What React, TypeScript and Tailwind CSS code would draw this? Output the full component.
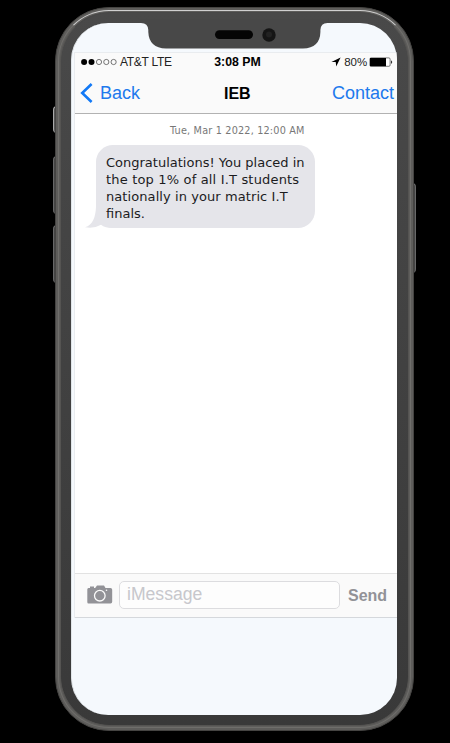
import React from "react";

function StatusBar() {
  return (
    <div className="flex h-[19px] shrink-0 items-center pl-[6px] pr-[4px] text-black">
      <svg className="mr-[3px] h-[8px] w-[36px] shrink-0 -translate-y-px" viewBox="0 0 36 8">
        <circle cx="3.1" cy="4" r="3" />
        <circle cx="10.5" cy="4" r="3" />
        <g fill="none" stroke="#555" strokeWidth="0.8">
          <circle cx="18" cy="4" r="2.6" />
          <circle cx="25.3" cy="4" r="2.6" />
          <circle cx="32.6" cy="4" r="2.6" />
        </g>
      </svg>
      <span className="w-[95px] -translate-y-px text-[12px] tracking-[-0.3px] text-[#222]">AT&amp;T LTE</span>
      <span className="w-[118px] text-[12.3px] font-bold">3:08 PM</span>
      <svg className="h-[10px] w-[10px] shrink-0 -translate-y-px" viewBox="0 0 10 10">
        <path d="M9.6.4.4 5h4.300l.5 4.600z" />
      </svg>
      <span className="ml-[3px] w-[25px] text-[11.5px] text-[#222]">80%</span>
      <svg className="h-[10px] w-[24px] shrink-0 -translate-y-px" viewBox="0 0 24 10">
        <rect x=".9" y=".9" width="20.2" height="8.4" rx="1.2" fill="#fff" stroke="#444" strokeWidth=".7" />
        <rect x="1" y="1" width="16" height="8.2" />
        <path d="M22.2 3.3q2 1.800 0 3.600z" />
      </svg>
    </div>
  );
}

function NavBar() {
  return (
    <div className="flex h-[42px] shrink-0 items-center border-b border-[#b2b2b2] pl-[5px] pt-[2px]">
      <svg className="mr-[7px] h-[20px] w-[13px] shrink-0 -translate-y-px" viewBox="0 0 13 20">
        <path d="M11.6 1 2.2 10l9.4 9" fill="none" stroke="#1279f6" strokeWidth="2.6" />
      </svg>
      <span className="w-[124px] text-[18px] text-[#2079ed]">Back</span>
      <span className="w-[108px] text-[16px] font-bold text-black">IEB</span>
      <span className="text-[18px] text-[#2079ed]">Contact</span>
    </div>
  );
}

function Messages() {
  return (
    <div className="flex-1 bg-white pt-[10px]">
      <p className="ml-[95px] whitespace-nowrap font-['DejaVu_Sans',sans-serif] text-[9.7px] leading-[13px] tracking-[0.18px] text-[#777]">
        Tue, Mar 1 2022, 12:00 AM
      </p>
      <div className="relative ml-[21px] mt-[8px] h-[83px] w-[219px] rounded-[17px] bg-[#e5e5ea] pl-[10px] pt-[9px] font-['DejaVu_Sans',sans-serif] text-[13px] leading-[17px] text-[#1c1c1e]">
        <svg className="absolute bottom-0 left-[-11px] h-[21px] w-[28px]" viewBox="0 0 28 21">
          <path d="M11 0C10.500 10 8 18 0 20.300q9 1.700 16-2.500Q20 21 28 21V0z" fill="#e5e5ea" />
        </svg>
        <p className="relative whitespace-nowrap">
          Congratulations! You placed in<br />
          <span className="tracking-[0.17px]">the top 1% of all I.T students</span><br />
          <span className="tracking-[0.08px]">nationally in your matric I.T</span><br />
          finals.
        </p>
      </div>
    </div>
  );
}

function Composer() {
  return (
    <div className="flex h-[45px] shrink-0 items-center border-y border-b-[#d5d8dc] border-t-[#e2e2e2] bg-[#fafafa] pl-[12px]">
      <svg className="mr-[6px] h-[19px] w-[26px] shrink-0 -translate-y-px" viewBox="0 0 26 19">
        <path d="M1.5 3H3V1.500h4V3h1.200L10 .5h7L18.500 3h5Q25.200 3 25.200 4.700v12q0 1.800-1.700 1.800h-22Q.3 18.500.3 17V4.500Q.3 3 1.500 3z" fill="#929297" />
        <circle cx="12.8" cy="10.7" r="5.3" fill="none" stroke="#fafafa" strokeWidth="1.3" />
        <circle cx="19.5" cy="5.3" r=".8" fill="#fafafa" />
      </svg>
      <div className="flex h-[28px] w-[221px] -translate-y-px items-center rounded-[5px] border border-[#dcdcdf] bg-[#fdfdfd] pl-[7px] text-[17.6px] text-[#c7c7cc]">
        iMessage
      </div>
      <span className="ml-[8px] text-[16px] font-bold text-[#929297]">Send</span>
    </div>
  );
}

export default function App() {
  return (
    <main className="relative h-[743px] w-[450px] overflow-hidden bg-black pl-[55px] pt-[7px] font-['Liberation_Sans',Arial,sans-serif]">
      <i className="absolute left-[53px] top-[106px] h-[27px] w-[4px] rounded-l-sm border-l border-t border-[#aaa] bg-[#555]" />
      <i className="absolute left-[53px] top-[156px] h-[58px] w-[4px] rounded-l-sm border-l border-t border-[#686868] bg-[#454545]" />
      <i className="absolute left-[53px] top-[225px] h-[58px] w-[4px] rounded-l-sm border-l border-t border-[#686868] bg-[#454545]" />
      <i className="absolute left-[411px] top-[183px] h-[90px] w-[5px] rounded-r-sm border-r border-t border-[#686868] bg-[#454545]" />

      <div className="relative h-[724px] w-[359px] rounded-[54px] border border-[#454442] bg-[#5e5d5b] p-[2px]">
        <div className="h-full rounded-[51px] border border-[#6f6e6b] border-t-[#d0d0d0] p-px">
          <div className="h-full rounded-[50px] border border-[#555452] border-t-[#474747] bg-linear-to-b from-[#494949] to-[#393939] p-[10px]">
            <div className="flex h-full w-[326px] flex-col overflow-hidden rounded-[37px] border-l border-[#e1e6e9] bg-[#f5f9fd]">
              <div className="h-[29px] shrink-0" />
              <div className="ml-[2px] flex h-[566px] shrink-0 flex-col border-l border-t border-[#e9ecef] bg-[#fafafa]">
                <StatusBar />
                <NavBar />
                <Messages />
                <Composer />
              </div>
            </div>
          </div>
        </div>
      </div>

      <svg className="absolute left-[140px] top-[19px] h-[32px] w-[190px]" viewBox="0 0 190 32">
        <path d="M0 0v4h1q7 0 7.300 7v2Q9 29 26 29.500h137q17-.5 17.400-16.500v-2q.3-7 7-7h1V0z" fill="#484848" />
        <rect x="75" y="11.2" width="38" height="8.8" rx="4.4" fill="#050505" />
        <circle cx="129" cy="16" r="6.7" fill="#151515" />
        <circle cx="129" cy="15.5" r="3" fill="#222" />
      </svg>
    </main>
  );
}
